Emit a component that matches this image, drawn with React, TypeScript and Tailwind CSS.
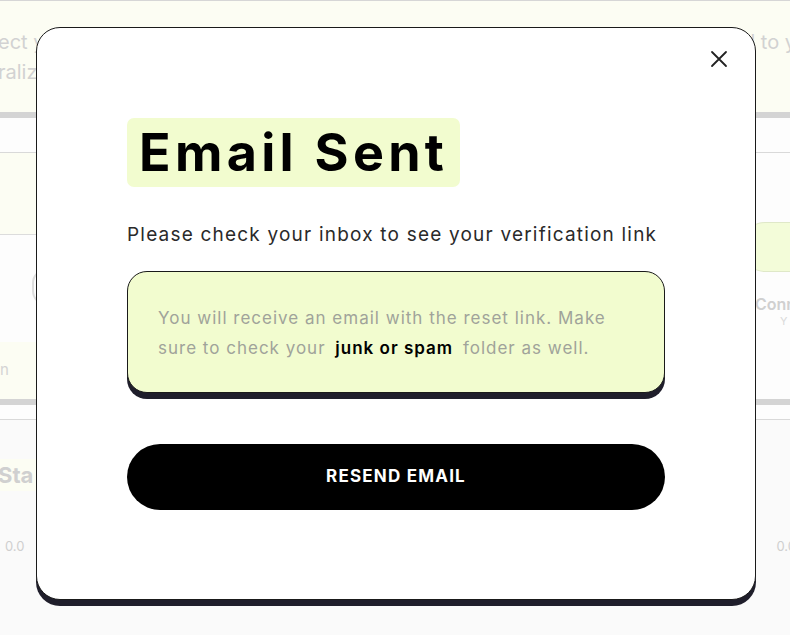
import React from "react";

const font = { fontFamily: "Inter, 'Noto Sans', sans-serif" };

export default function App() {
  return (
    <div className="relative w-[790px] h-[635px] overflow-hidden bg-[#fafafa]" style={font}>
      {/* faded background page */}
      <div className="flex flex-col w-full">
        <div className="h-[1px] bg-[#d6d6d6]" />
        <div className="h-[111px] bg-[#fcfdf3] flex flex-col justify-center gap-[8px] text-[20px] text-[#d2d2d2] leading-[22px]">
          <div className="flex justify-between">
            <span className="-ml-[2px]">ect y</span>
            <span className="-mr-[6px]">d to y</span>
          </div>
          <div className="flex justify-between">
            <span className="-ml-[2px]">raliz</span>
            <span />
          </div>
        </div>
        <div className="h-[6px] bg-[#d4d4d4]" />
        <div className="h-[35px] bg-[#fdfdfd] border-b border-[#d9d9d9]" />
        <div className="flex justify-between">
          <div className="w-[60px] flex flex-col">
            <div className="h-[82px] bg-[#fcfdf3] border-b border-[#dcdcdc]" />
            <div className="h-[109px] bg-[#fdfdfd] border-b border-[#dcdcdc] flex items-center">
              <div className="w-[36px] h-[36px] rounded-full border-2 border-[#dedede] ml-[32px] -mt-[4px]" />
            </div>
            <div className="h-[57px] bg-[#fcfdf3] flex items-center text-[15px] text-[#d4d4d4] -mt-[2px]">n</div>
          </div>
          <div className="w-[60px] flex flex-col items-end bg-[#fdfdfd]">
            <div className="h-[69px]" />
            <div className="w-[50px] h-[50px] rounded-l-full bg-[#f3fcd9] border border-[#dfe8c8] border-r-0" />
            <div className="mt-[22px] w-[35px] text-[16px] text-[#d0d0d0] font-semibold leading-[20px]">Conn</div>
            <div className="w-[10px] text-[11px] text-[#dadada] leading-[14px]">Y</div>
          </div>
        </div>
        <div className="h-[6px] bg-[#d4d4d4]" />
        <div className="h-[15px] bg-[#fdfdfd] border-b border-[#d9d9d9]" />
        <div className="flex justify-between mt-[39px]">
          <div className="bg-[#fcfdf3] h-[32px] pr-[4px] flex items-center text-[22px] font-bold text-[#d0d0d0] -ml-[2px]">Sta</div>
        </div>
        <div className="flex justify-between mt-[46px] text-[13px] text-[#cfcfcf]">
          <span className="ml-[5px]">0.0</span>
          <span className="-mr-[6px]">0.0</span>
        </div>
      </div>

      {/* modal */}
      <div className="absolute left-[36px] top-[27px] w-[720px] h-[573px] bg-white border border-[#1a1a1a] rounded-[24px] shadow-[0_6px_0_#1f1e2b] pl-[90px] pr-[90px] pt-[90px]">
        <button className="absolute right-[27px] top-[22px] w-[18px] h-[18px] flex items-center justify-center">
          <svg width="18" height="18" viewBox="0 0 18 18" fill="none" stroke="#222" strokeWidth="1.8" strokeLinecap="round">
            <path d="M2 2 L16 16 M16 2 L2 16" />
          </svg>
        </button>
        <div className="inline-flex items-center h-[69px] px-[12px] rounded-[7px] bg-[#f2fccf]">
          <h1 className="text-[52px] font-bold text-black leading-none tracking-[4.3px]">Email Sent</h1>
        </div>
        <p className="mt-[36px] text-[19px] leading-[24px] text-[#2a2a2a] tracking-[1.2px] whitespace-nowrap">
          Please check your inbox to see your verification link
        </p>
        <div className="mt-[24px] w-[538px] rounded-[20px] bg-[#f2fccf] border border-[#1a1a1a] shadow-[0_6px_0_#1f1e2b] px-[30px] pt-[31px] pb-[29px] text-[17px] leading-[30px] text-[#a0a39a] tracking-[1px]">
          You will receive an email with the reset link. Make
          <br />
          sure to check your{" "}
          <span className="font-semibold text-black px-[4px]">junk or spam</span>{" "}
          folder as well.
        </div>
        <button className="mt-[51px] w-[538px] h-[66px] rounded-full bg-black text-white text-[17px] font-bold tracking-[1.2px]">
          RESEND EMAIL
        </button>
      </div>
    </div>
  );
}
